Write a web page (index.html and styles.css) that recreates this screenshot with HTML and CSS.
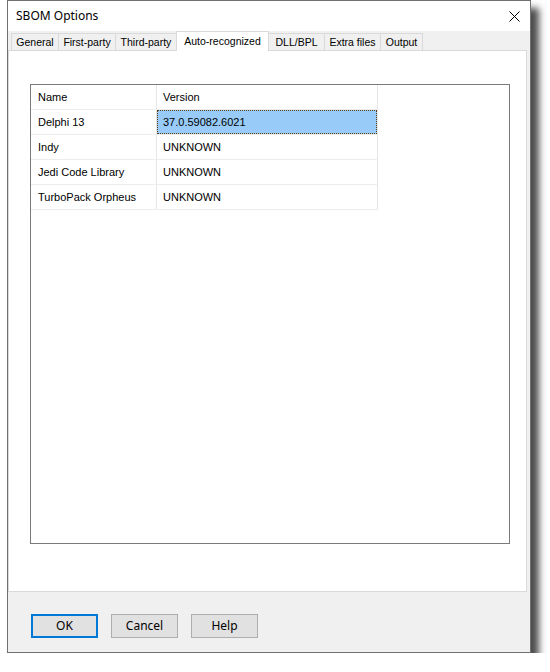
FILE: index.html
```html
<!DOCTYPE html>
<html lang="en">
<head>
<meta charset="utf-8">
<title>SBOM Options</title>
<link rel="stylesheet" href="styles.css">
</head>
<body>
<div class="window">
  <div class="titlebar">
    <span class="title">SBOM Options</span>
    <svg class="close" width="11" height="11" viewBox="0 0 11 11" aria-label="Close">
      <path d="M0.5 0.5 L10.5 10.5 M10.5 0.5 L0.5 10.5" stroke="#000" stroke-width="1" fill="none"/>
    </svg>
  </div>
  <div class="tabs">
    <div class="tab t-general">General</div>
    <div class="tab t-first">First-party</div>
    <div class="tab t-third">Third-party</div>
    <div class="tab t-auto active">Auto-recognized</div>
    <div class="tab t-dll">DLL/BPL</div>
    <div class="tab t-extra">Extra files</div>
    <div class="tab t-output">Output</div>
  </div>
  <div class="page">
    <div class="listbox">
      <div class="grid">
        <div class="cell">Name</div>
        <div class="cell">Version</div>
        <div class="cell">Delphi 13</div>
        <div class="cell selected">37.0.59082.6021</div>
        <div class="cell">Indy</div>
        <div class="cell">UNKNOWN</div>
        <div class="cell">Jedi Code Library</div>
        <div class="cell">UNKNOWN</div>
        <div class="cell">TurboPack Orpheus</div>
        <div class="cell">UNKNOWN</div>
      </div>
    </div>
  </div>
  <div class="footer">
    <button class="btn default">OK</button>
    <button class="btn">Cancel</button>
    <button class="btn">Help</button>
  </div>
</div>
</body>
</html>
```
FILE: styles.css
```css
html, body {
  margin: 0;
  padding: 0;
  background: #ffffff;
}

body {
  font-family: "Liberation Sans", Arial, sans-serif;
  font-size: 11px;
  color: #000;
}

/* dialog frame with its drop shadow */
.window {
  margin-left: 7px;
  width: 524px;
  height: 653px;
  box-sizing: border-box;
  border: 1px solid #707070;
  background: #f0f0f0;
  display: flex;
  flex-direction: column;
  box-shadow: 8px 8px 7px rgba(0, 0, 0, 0.7);
}

.titlebar {
  height: 30px;
  flex: none;
  background: #ffffff;
  display: flex;
  align-items: center;
  justify-content: space-between;
  padding: 0 10px 0 8px;
}

.title {
  font-family: "Noto Sans", "Open Sans", sans-serif;
  font-size: 12px;
  margin-top: -1px;
}

.close {
  display: block;
}

/* tab strip */
.tabs {
  height: 19px;
  flex: none;
  display: flex;
  align-items: flex-end;
  padding-left: 3px;
  position: relative;
  z-index: 1;
}

.tab {
  height: 17px;
  box-sizing: border-box;
  border: 1px solid #d9d9d9;
  border-bottom: none;
  margin-left: -1px;
  font-size: 10.5px;
  line-height: 16px;
  text-align: center;
  background: #f0f0f0;
  white-space: nowrap;
  overflow: hidden;
}

.tab:first-child {
  margin-left: 0;
}

.t-general { width: 48px; }
.t-first { width: 58px; }
.t-third { width: 62px; }
.t-auto { width: 93px; }
.t-dll { width: 57px; }
.t-extra { width: 57px; }
.t-output { width: 43px; }

.tab.active {
  height: 20px;
  margin-bottom: -1px;
  background: #ffffff;
  line-height: 18px;
}

/* tab page */
.page {
  flex: none;
  height: 542px;
  box-sizing: border-box;
  margin-right: 3px;
  border: 1px solid #d9d9d9;
  background: #ffffff;
  padding: 33px 0 0 21px;
}

.listbox {
  width: 480px;
  height: 460px;
  box-sizing: border-box;
  border: 1px solid #7a7a7a;
  background: #ffffff;
}

.grid {
  display: grid;
  grid-template-columns: 126px 221px;
  grid-auto-rows: 25px;
}

.cell {
  box-sizing: border-box;
  border-right: 1px solid #e6e6e6;
  border-bottom: 1px solid #ededed;
  padding-left: 7px;
  line-height: 24px;
  white-space: nowrap;
}

.cell:nth-child(2n) {
  padding-left: 6px;
}

.cell.selected {
  position: relative;
  background: #99cbf8;
}

.cell.selected::after {
  content: "";
  position: absolute;
  left: 0;
  top: 0;
  right: 0;
  bottom: 0;
  border: 1px dotted #5a3b12;
}

/* button row */
.footer {
  flex: 1;
  display: flex;
  align-items: flex-start;
  gap: 13px;
  padding: 22px 0 0 23px;
}

.btn {
  width: 67px;
  height: 24px;
  box-sizing: border-box;
  margin: 0;
  padding: 0;
  border: 1px solid #adadad;
  background: #e1e1e1;
  font-family: "Noto Sans", "Open Sans", sans-serif;
  font-size: 12px;
  color: #000;
  line-height: 20px;
}

.btn.default {
  border: 2px solid #0078d7;
}
```
